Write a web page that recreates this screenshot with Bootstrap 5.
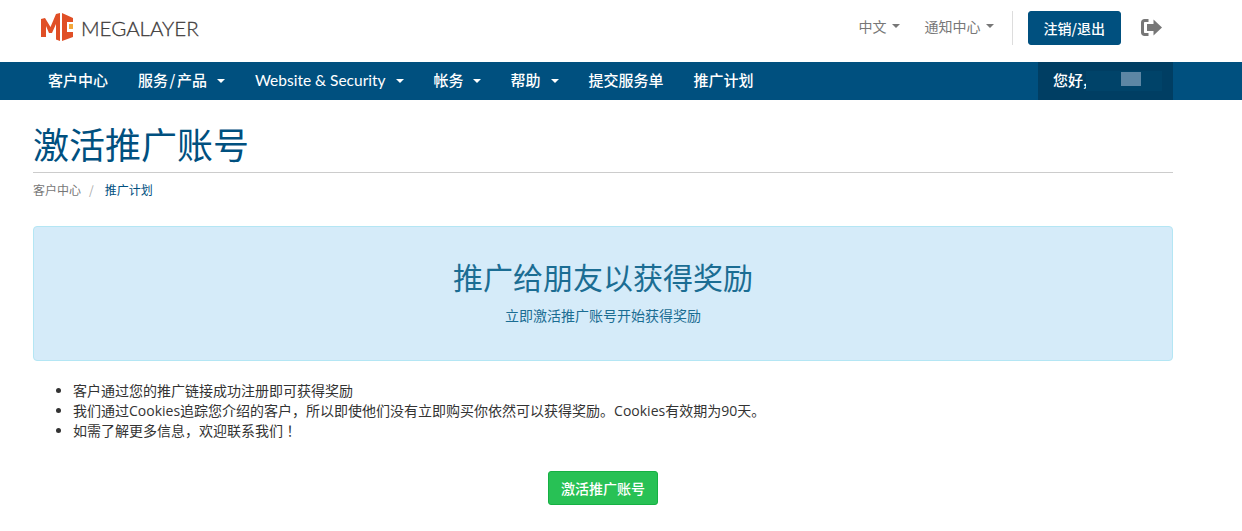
<!DOCTYPE html>
<html lang="zh">
<head>
<meta charset="utf-8">
<title>激活推广账号</title>
<link href="https://cdn.jsdelivr.net/npm/bootstrap@5.3.0/dist/css/bootstrap.min.css" rel="stylesheet">
<style>
body{font-family:"Open Sans","Noto Sans","Noto Sans CJK SC",sans-serif;font-size:14px;color:#333;background:#fff;overflow:hidden}
.shell{width:1140px;margin-left:33px}
.topbar{height:62px}
.topbar .shell{padding-bottom:6px}
.brandmark{gap:7px;margin-left:8px;margin-top:-2px}
.brandtext{font-family:"Lato",sans-serif;font-weight:300;font-size:20.5px;color:#3d3a3a;letter-spacing:0;line-height:1;-webkit-text-stroke:.3px #3d3a3a;margin-top:2px}
.toplink{font-family:"Noto Sans CJK SC",sans-serif;font-size:14px;color:#777;text-decoration:none;display:flex;align-items:center;margin-bottom:4px}
.toplink-next{margin-left:25px}
.caret-down{display:inline-block;width:0;height:0;border-top:4px solid currentColor;border-left:4px solid transparent;border-right:4px solid transparent;margin-left:5px}
.vrule{width:1px;height:34px;background:#ddd;margin:0 15px 0 18px}
.btn-brand{background:#00507f;border:1px solid #00507f;color:#fff;font-family:"Noto Sans CJK SC",sans-serif;font-size:14px;font-weight:500;line-height:20px;padding:6px 15px;border-radius:3px;height:34px}
.btn-brand:hover{background:#00507f;color:#fff}
.exit-ic{margin-left:20px;margin-right:11px;margin-top:-2px}
.mainbar{background:#00507f;height:38px}
.mainbar .shell{height:38px}
.menu-link{font-family:"Noto Sans CJK SC",sans-serif;font-size:15px;font-weight:500;color:#fff;text-decoration:none;padding:0 15px 2px;display:flex;align-items:center;height:38px;white-space:nowrap}
.menu-link:hover{color:#fff}
.menu-link .caret-down{margin-left:10px;margin-top:2px}
.menu-link .caret-tight{margin-left:9px}
.latin-label{font-family:"Lato",sans-serif;font-weight:400;font-size:15.500px;margin-top:2px}
.slash-gap{padding:0 1.500px}
.greeting{width:135px;height:38px;background:#003e63;color:#fff;font-family:"Noto Sans CJK SC",sans-serif;font-size:15px;font-weight:500;padding:0 0 2px 15px;display:flex;align-items:center;position:relative}
.mask-a{position:absolute;left:48px;top:9px;width:76px;height:20px;background:#004369}
.mask-b{position:absolute;left:83px;top:10px;width:20px;height:14px;background:#5d86a4}
.page-title{font-family:"Noto Sans CJK SC",sans-serif;font-size:36px;font-weight:400;color:#00507f;line-height:44px;margin:0;padding:21px 0 7px;border-bottom:1px solid #ccc;box-sizing:content-box;height:44px}
.crumbs{font-family:"Noto Sans CJK SC",sans-serif;font-size:12px;line-height:17px;margin-top:8px;color:#777}
.crumbs .sep{color:#aaa;margin:0 11px 0 8px}
.crumbs .here{color:#00507f}
.promo{margin-top:28px;height:135px;background:#d5ebf9;border:1px solid #b4e6f4;border-radius:4px;color:#1b6d93;text-align:center;padding-top:29px}
.promo h2{font-family:"Noto Sans CJK SC",sans-serif;font-size:30px;font-weight:400;line-height:40px;margin:0 0 9px}
.promo p{font-family:"Noto Sans CJK SC",sans-serif;font-size:14px;line-height:20px;margin:0}
.perks{font-family:"Open Sans","Noto Sans CJK SC",sans-serif;font-size:14px;line-height:20px;margin:20px 0 0;padding-left:40px;color:#333}
.bang{font-family:"Noto Sans CJK JP",sans-serif;line-height:1}
.cta-wrap{margin-top:30px}
.btn-cta{background:#28c155;border:1px solid #16b043;color:#fff;font-family:"Noto Sans CJK SC",sans-serif;font-size:14px;font-weight:500;line-height:20px;padding:6px 12px;border-radius:3px;height:34px}
.btn-cta:hover{background:#28c155;color:#fff}
</style>
</head>
<body>
<header class="topbar">
  <div class="shell h-100 d-flex align-items-center justify-content-between">
    <div class="brandmark d-flex align-items-center">
      <svg width="33" height="28" viewBox="0 0 33 28" aria-hidden="true">
        <path fill="#e04f26" d="M0 6 4 5 9.500 14 15 1 19 0 19 28 15 26.500 15 11 11 20 8 20 5 13 5 24 0 24Z"/>
        <path fill="#e04f26" d="M21 0 32 5 32 9 26 9 26 19 32 19 32 24 21 28Z"/>
        <rect fill="#f3a73b" x="28" y="11" width="4" height="5"/>
      </svg>
      <span class="brandtext">MEGALAYER</span>
    </div>
    <div class="d-flex align-items-center">
      <a class="toplink" href="#">中文<span class="caret-down"></span></a>
      <a class="toplink toplink-next" href="#">通知中心<span class="caret-down"></span></a>
      <span class="vrule"></span>
      <a class="btn btn-brand" href="#">注销/退出</a>
      <svg class="exit-ic" width="21" height="17" viewBox="0 0 21 17" aria-hidden="true">
        <path fill="#777" d="M7.500 0H3.500C1.500 0 0 1.500 0 3.500v10C0 15.500 1.500 17 3.500 17H7.500v-3H4c-.6 0-1-.4-1-1V4c0-.6.4-1 1-1H7.500Z"/>
        <path fill="#777" d="M6 5h6.500V.5L21 8.500l-8.500 8V12H6Z"/>
      </svg>
    </div>
  </div>
</header>
<nav class="mainbar">
  <div class="shell d-flex justify-content-between">
    <div class="d-flex">
      <a class="menu-link" href="#">客户中心</a>
      <a class="menu-link" href="#">服务<span class="slash-gap">/</span>产品<span class="caret-down"></span></a>
      <a class="menu-link" href="#"><span class="latin-label">Website &amp; Security</span><span class="caret-down"></span></a>
      <a class="menu-link" href="#">帐务<span class="caret-down caret-tight"></span></a>
      <a class="menu-link" href="#">帮助<span class="caret-down"></span></a>
      <a class="menu-link" href="#">提交服务单</a>
      <a class="menu-link" href="#">推广计划</a>
    </div>
    <div class="greeting">您好,<span class="mask-a"></span><span class="mask-b"></span></div>
  </div>
</nav>
<main class="shell">
  <h1 class="page-title">激活推广账号</h1>
  <div class="crumbs"><span>客户中心</span><span class="sep">/</span><span class="here">推广计划</span></div>
  <div class="promo">
    <h2>推广给朋友以获得奖励</h2>
    <p>立即激活推广账号开始获得奖励</p>
  </div>
  <ul class="perks">
    <li>客户通过您的推广链接成功注册即可获得奖励</li>
    <li>我们通过Cookies追踪您介绍的客户，所以即使他们没有立即购买你依然可以获得奖励。Cookies有效期为90天。</li>
    <li>如需了解更多信息，欢迎联系我们<span class="bang" lang="ja">！</span></li>
  </ul>
  <div class="cta-wrap text-center"><a class="btn btn-cta" href="#">激活推广账号</a></div>
</main>
<script src="https://cdn.jsdelivr.net/npm/bootstrap@5.3.0/dist/js/bootstrap.bundle.min.js"></script>
</body>
</html>
